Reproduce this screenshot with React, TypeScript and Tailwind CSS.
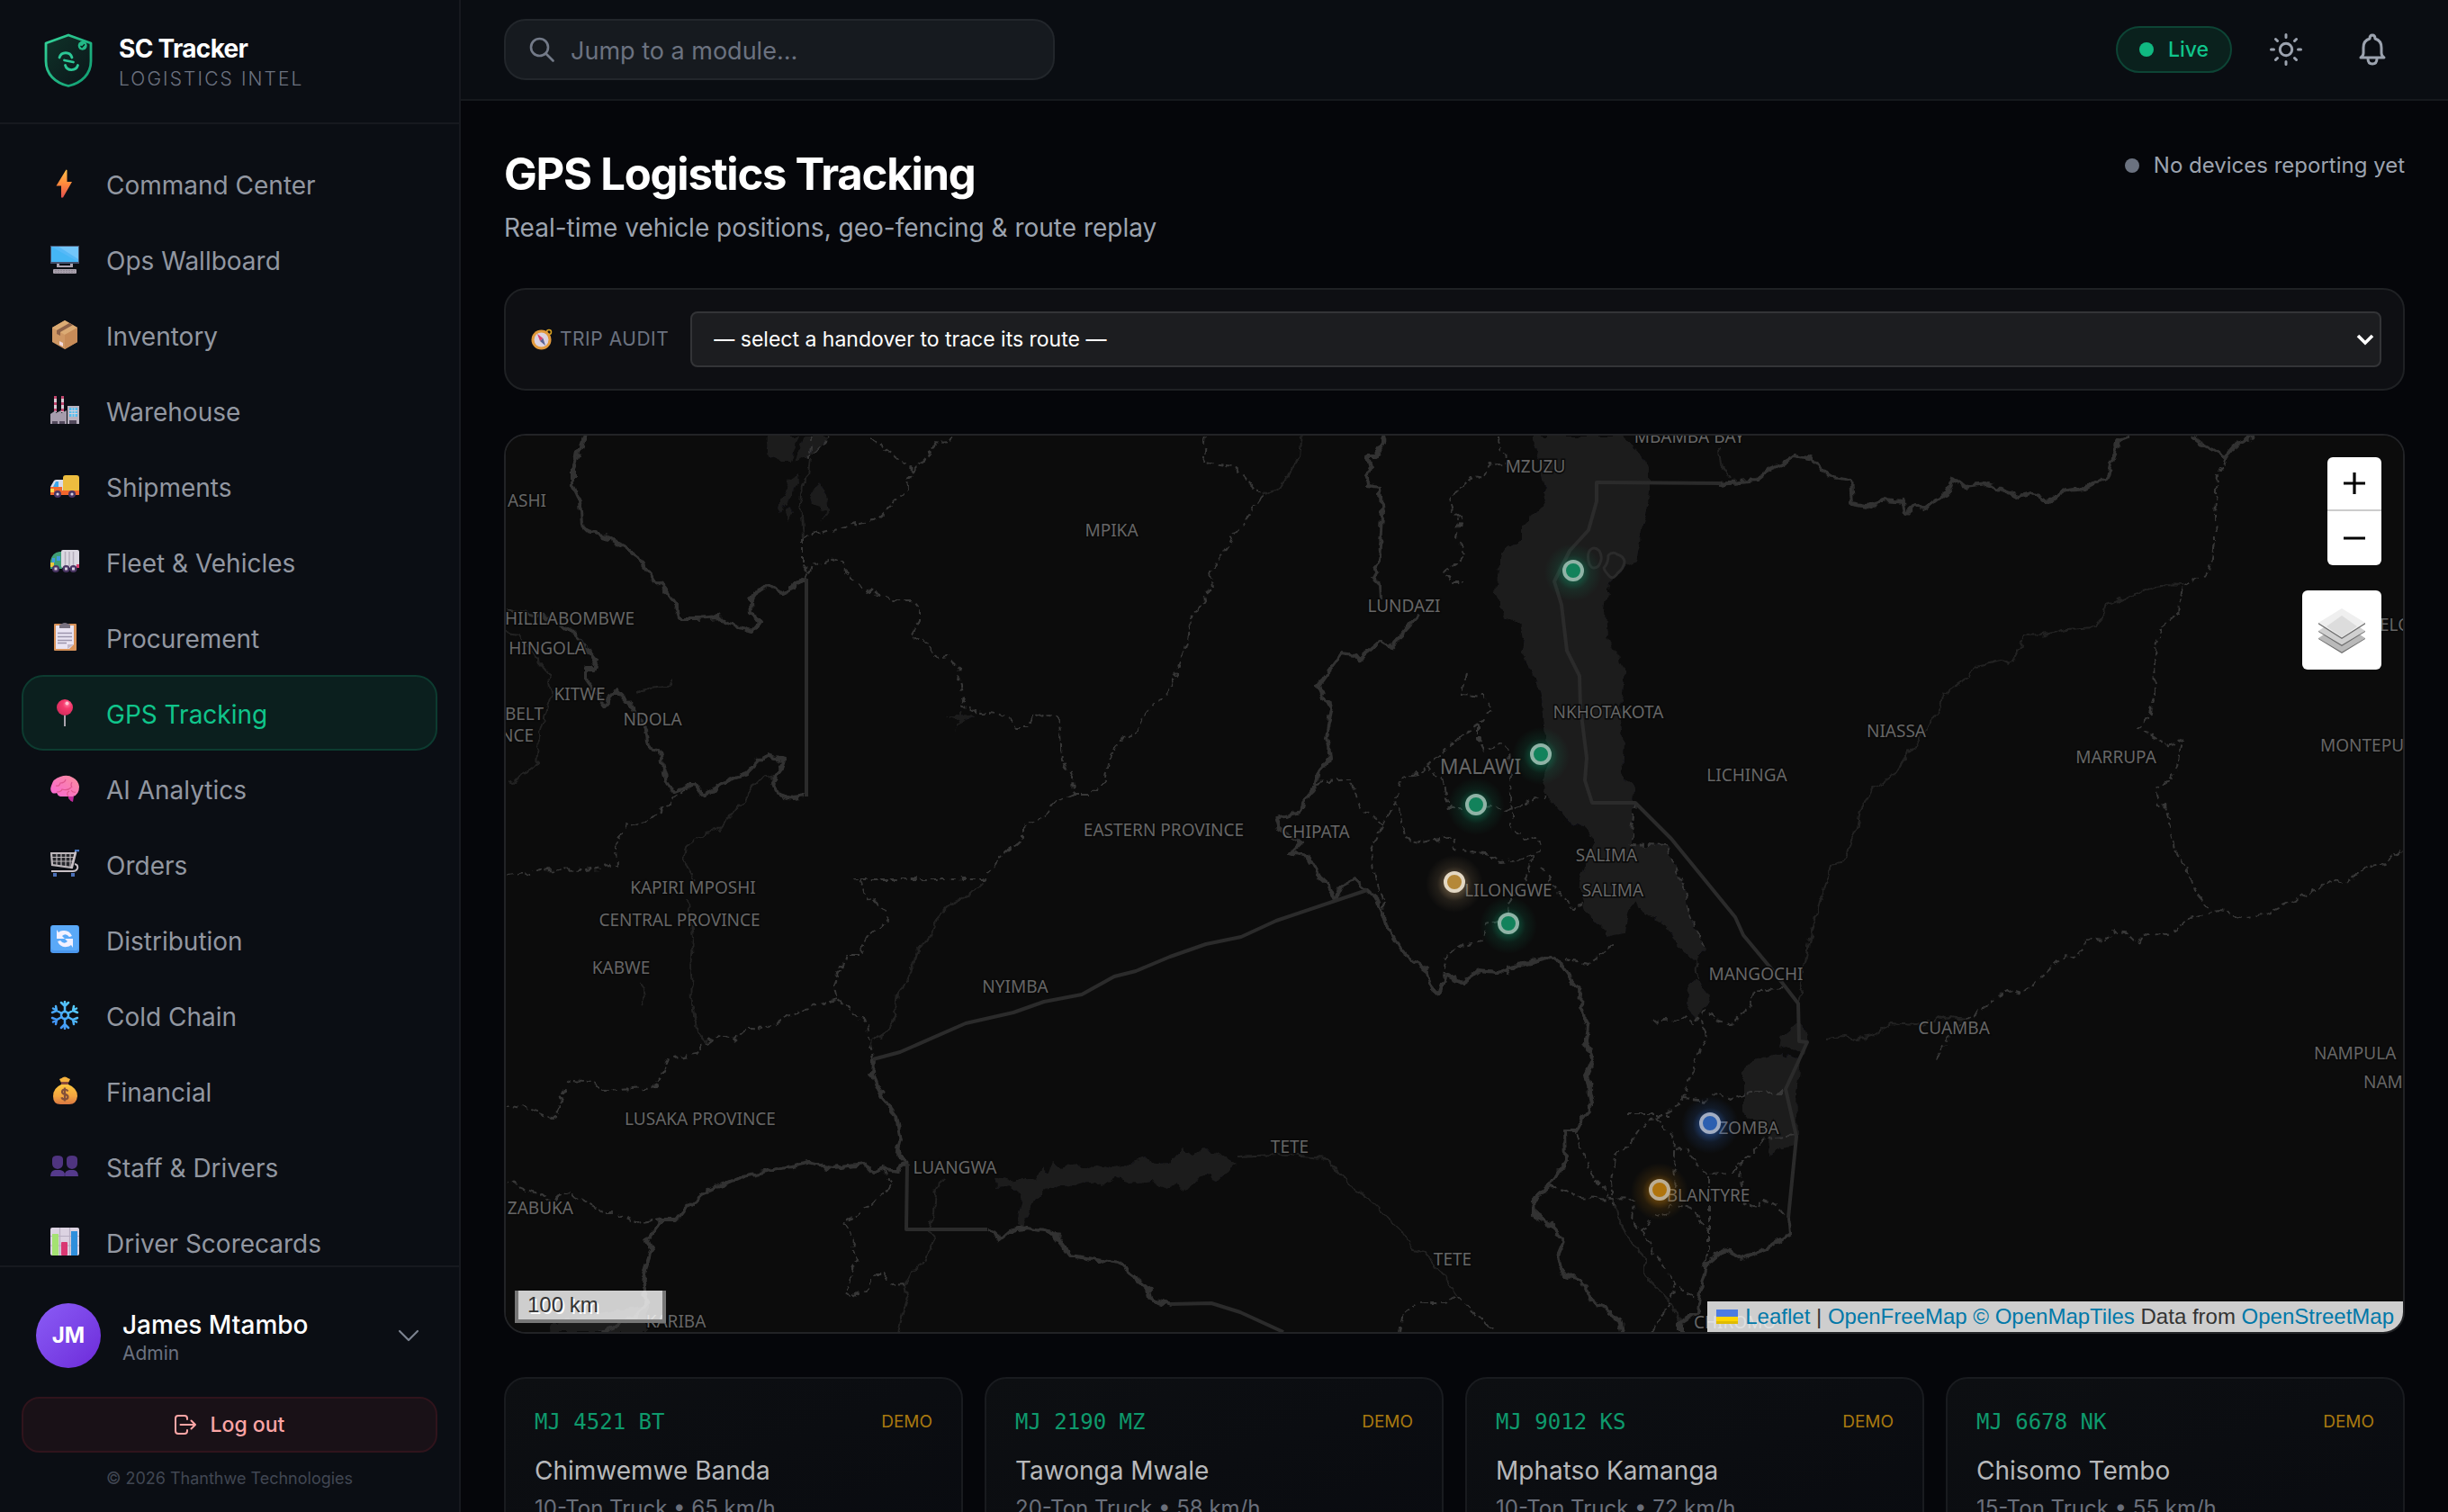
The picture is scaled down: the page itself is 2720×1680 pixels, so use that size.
import type { ReactNode } from "react";

const navItems: { label: string; icon: ReactNode }[] = [
  {
    label: "Command Center",
    icon: (
      <>
        <defs>
          <linearGradient id="bolt" x1="0" y1="0" x2="0" y2="1">
            <stop offset="0" stopColor="#ffc04a" />
            <stop offset="0.5" stopColor="#ff8a3c" />
            <stop offset="1" stopColor="#e2504f" />
          </linearGradient>
        </defs>
        <path d="M17.500 0.500 18.500 1v13h5.500L14 31.500h-2V18.500H6.500z" fill="url(#bolt)" />
      </>
    ),
  },
  {
    label: "Ops Wallboard",
    icon: (
      <>
        <rect x="0" y="1" width="32" height="20" fill="#46526e" />
        <rect x="1" y="2" width="30" height="17" fill="#45b6f5" />
        <path d="M1 2h14l16 12v5z" fill="#56b9f8" />
        <path d="M9 2h22v14z" fill="#73c6fb" />
        <path d="M7 21h3v2h12v-2h3v4H7z" fill="#a9a1ad" />
        <rect x="3" y="27" width="26" height="5" rx="1" fill="#a9a1ad" />
        <path d="M5 28.500h22M5 30.500h22" stroke="#8f8894" strokeDasharray="2 1" strokeWidth="1" />
      </>
    ),
  },
  {
    label: "Inventory",
    icon: (
      <>
        <path d="M16 0 30 8v16L16 32 2 24V8z" fill="#cf9764" />
        <path d="M16 0 30 8 16 16 2 8z" fill="#dcab74" />
        <path d="M16 16 30 8v16L16 32z" fill="#c78b58" />
        <path d="m7 11 14-8 4 2-14 8v4l-4-2z" fill="#8d6148" />
        <path d="m10 23 4 2v4l-4-2z" fill="#f1d9dc" />
      </>
    ),
  },
  {
    label: "Warehouse",
    icon: (
      <>
        <path d="M4 0h3v18H4zM12 0h3v18h-3z" fill="#d9c9d2" />
        <path d="M4 0h3v3H4zM4 7h3v3H4zM4 14h3v3H4zM12 0h3v3h-3zM12 7h3v3h-3zM12 14h3v3h-3z" fill="#c0456d" />
        <rect x="19" y="11" width="13" height="20" fill="#b9b2c0" />
        <path d="M21 13h9v10h-9z" fill="#52bdf0" />
        <path d="M24 13v10M27 13v10M21 16.500h9M21 19.500h9" stroke="#d6d0db" strokeWidth="1" />
        <path d="M0 31V20l6-4v3l6-3v3l6-3v15z" fill="#a69cac" />
        <path d="M2 28h6v3H2zM10 28h6v3h-6zM21 27h8v4h-8z" fill="#52495c" />
      </>
    ),
  },
  {
    label: "Shipments",
    icon: (
      <>
        <rect x="14" y="4" width="18" height="19" rx="3" fill="#edbd3f" />
        <path d="M0 17 4 10q1-1 3-1h7v13H0z" fill="#d9dbe8" />
        <path d="m3 17 3-6h3v6z" fill="#3aa7ec" />
        <path d="M0 17h13v4h19v5H0z" fill="#f2662c" />
        <path d="M0 19h4v4H0z" fill="#ffd34a" />
        <circle cx="8" cy="25" r="4" fill="#4a3564" />
        <circle cx="24" cy="25" r="4" fill="#4a3564" />
        <circle cx="8" cy="25" r="1.600" fill="#d8d0e0" />
        <circle cx="24" cy="25" r="1.600" fill="#d8d0e0" />
      </>
    ),
  },
  {
    label: "Fleet & Vehicles",
    icon: (
      <>
        <path d="M0 22v-7q2-9 10-10h3v19H0z" fill="#3f9f76" />
        <path d="M2 12h3v5H2zM7 10h4v5H7z" fill="#3f9ae0" />
        <path d="M0 17h4v5H0z" fill="#e9c93e" />
        <rect x="12" y="3" width="20" height="20" rx="2" fill="#dcd8e2" />
        <path d="M16.500 5v16M21 5v16M25.500 5v16" stroke="#b5aebd" strokeWidth="1.500" />
        <path d="M29 19h3v4h-3z" fill="#d63b6b" />
        <circle cx="6" cy="24" r="4" fill="#4a3564" />
        <circle cx="17.500" cy="24" r="4" fill="#4a3564" />
        <circle cx="25.500" cy="24" r="4" fill="#4a3564" />
        <path d="M4.500 24h3M16 24h3M24 24h3" stroke="#d8d0e0" strokeWidth="3" />
      </>
    ),
  },
  {
    label: "Procurement",
    icon: (
      <>
        <rect x="4" y="1" width="25" height="30" rx="1" fill="#d9935a" />
        <path d="M6 3h20v21l-5 5H6z" fill="#e9e3f2" />
        <path d="M19 29v-5h7z" fill="#c3b9ca" />
        <path d="M8 11.500h16M8 15.500h16M8 19.500h16M8 22.500h10" stroke="#9d95ad" strokeWidth="1.500" />
        <path d="M10 6V3q0-2 3-2 1-1 3-1t3 1q3 0 3 2v3z" fill="#77707f" />
      </>
    ),
  },
  {
    label: "GPS Tracking",
    icon: (
      <>
        <defs>
          <radialGradient id="pin" cx="0.65" cy="0.3" r="0.8">
            <stop offset="0" stopColor="#ff7ea0" />
            <stop offset="0.35" stopColor="#f5386c" />
            <stop offset="1" stopColor="#cf2c5b" />
          </radialGradient>
        </defs>
        <rect x="15" y="17" width="2" height="14" fill="#a9a3ad" />
        <circle cx="16" cy="10" r="9" fill="url(#pin)" />
        <circle cx="18.500" cy="5.500" r="2" fill="#ffc4d2" />
      </>
    ),
  },
  {
    label: "AI Analytics",
    icon: (
      <>
        <defs>
          <linearGradient id="brain" x1="1" y1="0" x2="0" y2="1">
            <stop offset="0" stopColor="#fb8f9c" />
            <stop offset="1" stopColor="#f765d5" />
          </linearGradient>
        </defs>
        <path d="M20 25h6l-1 6q-3-1-5-4z" fill="#c12a9c" />
        <path d="M2 21Q-1 18 1 13 3 5 11 3q8-3 14 1 6 3 7 10 0 9-7 11H11q-3-1-4-4-3 1-5 0z" fill="url(#brain)" />
        <path d="M6 13q4 1 5-3 5 0 6-4M7 20q5 0 6-3 6 2 10-2M20 25q-3-4 1-6M24 15q-2-3 0-6M28 20q-3 1-5-2" fill="none" stroke="#e0568f" strokeWidth="1.200" />
      </>
    ),
  },
  {
    label: "Orders",
    icon: (
      <>
        <path d="M1 4h27l-4 16-22-3z" fill="#25262b" stroke="#bdb7bb" strokeWidth="2.200" />
        <path d="M7 4v13M12 4v14M17 4v14M22 4v15M2 8.500h24M2 13h23" stroke="#bdb7bb" strokeWidth="1.200" />
        <path d="M28 2l-5 19M27 16q4 1 3 5-1 3-5 3H1" fill="none" stroke="#c9c0c6" strokeWidth="2" />
        <path d="M27 1h5" stroke="#4a78c4" strokeWidth="2.500" />
        <path d="M3 26h4v4H3zM23 26h4v4h-4z" fill="#4a6fb8" />
      </>
    ),
  },
  {
    label: "Distribution",
    icon: (
      <>
        <rect width="32" height="31" y="0" rx="3" fill="#4b97ee" />
        <rect x="1" y="0" width="30" height="28" rx="3" fill="#5aa9f8" />
        <path d="M7 5v10h9l-3-3q4-4 8 1l3-1Q21 5 14 6q-3 0-5 2z" fill="#f3f1ff" />
        <path d="M25 25V15h-9l3 3q-4 4-8-1l-3 1q3 7 10 6 3 0 5-2z" fill="#f3f1ff" />
      </>
    ),
  },
  {
    label: "Cold Chain",
    icon: (
      <>
        <defs>
          <linearGradient id="flake" gradientUnits="userSpaceOnUse" x1="0" y1="32" x2="32" y2="0">
            <stop offset="0" stopColor="#3b82f6" />
            <stop offset="1" stopColor="#5cdcfb" />
          </linearGradient>
        </defs>
        <g fill="none" stroke="url(#flake)" strokeWidth="2.500" strokeLinecap="round">
          <circle cx="16" cy="16" r="4" />
          <path d="M16 12V1M12 2l4 4 4-4M16 20v11M12 30l4-4 4 4" />
          <path d="M12.500 14 3 8.500M2 13l5-2-1-5M19.500 18l9.500 5.500M30 19l-5 2 1 5" />
          <path d="M12.500 18 3 23.500M2 19l5 2-1 5M19.500 14 29 8.500M30 13l-5-2 1-5" />
        </g>
      </>
    ),
  },
  {
    label: "Financial",
    icon: (
      <>
        <defs>
          <linearGradient id="bag" x1="0" y1="0" x2="0" y2="1">
            <stop offset="0" stopColor="#fdc63f" />
            <stop offset="0.6" stopColor="#f3a440" />
            <stop offset="1" stopColor="#d97742" />
          </linearGradient>
        </defs>
        <path d="M10 3q3-1 4-2 2-1 4 0 1 1 4 2l-2 4h-8z" fill="#f6b23e" />
        <path d="M12 9h8q10 4 10 13-1 9-9 9H11q-8 0-8-9 0-9 9-13z" fill="url(#bag)" />
        <rect x="12" y="6" width="8" height="3" fill="#8a4b3a" />
        <path d="M19.500 16.500q-1-2-3.500-2-3 0-3 2.700 0 2 3 2.600 3.500.6 3.500 3 0 2.700-3.500 2.700-3 0-3.500-2.300M16 12.500v15" fill="none" stroke="#83503a" strokeWidth="2.200" />
      </>
    ),
  },
  {
    label: "Staff & Drivers",
    icon: (
      <>
        <path d="M2 8q0-4 6-4t6 4v5q0 5-6 6-6-1-6-6zM18 8q0-4 6-4t6 4v5q0 5-6 6-6-1-6-6z" fill="#4f3480" />
        <path d="M0 27q0-6 5-7h6q5 1 5 5 0-4 5-5h5q5 1 5 7z" fill="#553a8c" />
        <path d="M16 25v2" stroke="#3b2666" strokeWidth="1" />
      </>
    ),
  },
  {
    label: "Driver Scorecards",
    icon: (
      <>
        <rect width="32" height="31" rx="2" fill="#dcd3e2" />
        <path d="M0 9.500h32M0 20h32M10.500 0v31M21.500 0v31" stroke="#b8aec2" strokeWidth="1.200" />
        <rect x="2" y="7" width="7" height="24" fill="#a4e272" />
        <rect x="12" y="16" width="7" height="15" rx="1" fill="#d93873" />
        <rect x="23" y="4" width="7" height="27" fill="#2f8fdc" />
      </>
    ),
  },
];

const vehicles = [
  { plate: "MJ 4521 BT", driver: "Chimwemwe Banda", info: "10-Ton Truck • 65 km/h" },
  { plate: "MJ 2190 MZ", driver: "Tawonga Mwale", info: "20-Ton Truck • 58 km/h" },
  { plate: "MJ 9012 KS", driver: "Mphatso Kamanga", info: "10-Ton Truck • 72 km/h" },
  { plate: "MJ 6678 NK", driver: "Chisomo Tembo", info: "15-Ton Truck • 55 km/h" },
];

// Map geometry, in the coordinate space of the view box below
const lakes = [
  "1703,484 1712,521 1717,553 1712,565 1692,583 1692,600 1670,612 1664,640 1662,660 1673,687 1689,691 1694,711 1691,727 1708,757 1715,786 1718,818 1721,846 1714,865 1719,885 1740,911 1758,917 1772,936 1754,980 1761,1012 1783,1033 1786,1041 1804,1037 1809,1012 1816,1000 1829,1018 1848,1025 1871,1059 1884,1067 1895,1055 1878,1019 1871,988 1852,940 1813,938 1816,877 1802,861 1804,826 1800,794 1806,747 1786,707 1784,680 1788,648 1806,630 1818,624 1824,590 1833,549 1833,525 1825,506 1802,484",
  "1884,1087 1901,1108 1886,1132 1874,1120 1875,1095",
  "1936,1190 1949,1177 1979,1170 2000,1177 1996,1217 1998,1260 1991,1273 1979,1275 1966,1285 1964,1265 1936,1233",
  "1998,1137 2009,1147 2005,1172 1988,1163 1977,1165 1979,1153",
  "1105,1306 1125,1312 1141,1308 1150,1312 1158,1298 1164,1306 1170,1290 1180,1299 1192,1291 1205,1300 1219,1294 1240,1298 1258,1291 1272,1286 1284,1294 1300,1293 1315,1276 1326,1284 1336,1277 1353,1280 1362,1286 1375,1295 1364,1302 1353,1312 1340,1306 1329,1310 1322,1318 1315,1325 1306,1316 1296,1320 1280,1312 1257,1315 1240,1308 1222,1320 1214,1313 1196,1318 1180,1315 1163,1322 1152,1332 1146,1340 1136,1364 1129,1362 1136,1330 1122,1318 1107,1320",
  "852,484 851,502 868,513 878,513 882,498 888,484",
  "894,484 888,500 882,513 894,507 900,508 921,484",
  "887,525 877,533 864,565 867,570 888,537",
  "910,535 900,552 903,563 917,567 912,580 922,567 919,550",
  "877,563 872,568 874,580 882,568",
  "1050,795 1066,795 1068,790 1072,795 1084,796 1072,800 1060,810 1066,799",
  "615,1470 650,1462 719,1450 719,1480 610,1480",
];

const countryBorders = [
  "649,484 637,520 637,540 645,557 647,583 657,593 678,598 701,613 704,613 724,642 737,652 750,670 755,687 774,687 797,685 804,692 835,701 844,690 834,683 833,667 838,660 853,650 868,659 882,653 884,647 896,643",
  "896,885 880,887 864,882 859,868 867,857 871,845 855,839 843,845 829,860 806,868 781,885 772,872 749,880 741,868 731,833 720,830 717,810 698,780 685,767 671,783 650,753 650,743 660,743 663,733 648,715 630,697 609,687 562,678",
  "970,1177 969,1193 979,1217 996,1240 1001,1267 997,1282 1008,1293",
  "1097,1366 1111,1377 1122,1368 1141,1364 1170,1369 1190,1395 1243,1404 1277,1433 1279,1443 1300,1450",
  "1008,1293 996,1301 979,1298 969,1303 961,1294 925,1298 899,1292 853,1301 826,1307 787,1323 761,1343 752,1355 734,1355 719,1377 724,1388 718,1407 714,1425 719,1447 707,1463 667,1480",
  "1539,484 1529,508 1519,508 1523,521 1517,539 1533,541 1536,573 1533,624 1524,640 1534,650 1535,666",
  "1577,683 1563,699 1545,719 1533,713 1510,733 1506,728 1490,726 1478,743 1465,761 1469,776 1481,784 1474,818 1478,842 1465,857 1462,873 1448,891 1446,903 1418,909 1421,921 1446,936 1434,948 1453,952 1467,976 1476,984 1483,999 1490,984 1506,978 1519,989 1531,1000 1540,1027 1562,1062 1586,1080 1591,1098 1599,1105 1606,1083 1624,1092 1644,1078 1673,1081 1676,1075 1727,1062 1744,1087 1757,1102 1756,1118 1764,1140 1762,1157 1771,1178 1763,1193 1769,1227 1758,1243 1751,1257 1739,1257 1740,1290 1722,1317 1705,1333 1706,1350 1722,1360 1738,1378 1730,1397 1738,1417 1758,1423 1768,1445 1782,1453 1799,1467 1802,1480",
  "1912,537 1953,533 1967,521 1980,515 1994,506 2013,510 2032,529 2056,533 2058,559 2079,563 2093,555 2115,557 2117,571 2129,560 2138,566 2164,547 2170,531 2183,541 2207,538 2242,551 2258,548 2276,557 2296,545 2317,543 2343,529 2347,510 2355,488 2365,484",
  "1987,1353 1989,1370 1964,1387 1935,1398 1918,1387 1896,1405 1891,1427 1887,1457 1867,1470 1867,1480",
  "2435,484 2445,492 2473,508 2480,498 2502,484",
];

const straightBorders = [
  "896,643 896,885",
  "970,1177 1000,1169 1073,1137 1126,1125 1160,1113 1202,1105 1238,1085 1262,1079 1300,1063 1340,1049 1379,1041 1418,1023 1519,989",
  "1008,1293 1007,1366 1097,1366",
  "1300,1449 1346,1448 1378,1458 1426,1480",
  "1912,537 1774,536 1774,557 1765,589 1744,612 1727,646 1735,672 1741,723 1755,751 1756,786 1763,842 1761,867 1769,892 1817,892 1857,932 1928,1019 1937,1039 1967,1075 1981,1093 1998,1115 1999,1157 2008,1158 1984,1210 1996,1263 1987,1353",
];

const provinceBorders = [
  "892,597 939,585 975,577 1009,542 1008,533 1015,523 965,484",
  "1015,523 1031,505 1040,492 1054,491 1059,484",
  "903,484 899,508 921,484",
  "892,597 892,627 899,637 896,643 903,628 923,621 939,627 940,637 956,652 981,662 992,667 1013,667 1022,678 1022,690 1013,705 1031,715 1041,732 1054,730 1067,742 1065,757 1070,772 1068,782 1082,790 1109,793 1123,798 1130,808 1142,808 1148,797 1160,792 1177,800 1180,845 1191,862 1192,882",
  "1192,882 1210,882 1227,870 1231,847 1247,820 1260,816 1278,786 1294,774 1308,747 1320,707 1322,691 1347,652 1345,636 1370,597 1402,553 1382,529 1370,519 1336,515 1340,484",
  "1192,882 1171,892 1160,907 1137,918 1137,933 1109,953 1102,968 1092,977 948,977 957,980 962,998 976,1003 987,1023 966,1040 954,1060 942,1060 935,1073 927,1097 930,1110 952,1127 964,1140 967,1160 970,1177",
  "930,1110 913,1115 879,1127 850,1143 831,1142 816,1155 797,1149 785,1158 773,1172 743,1177 729,1208 671,1212 659,1203 639,1200 630,1203 618,1237 613,1242 588,1232 563,1227",
  "770,870 737,898 717,913 696,918 684,940 685,962 650,967 600,966 588,971 562,973",
  "734,1355 707,1359 685,1348 671,1348 644,1332 632,1325 608,1335 598,1327 563,1312",
  "983,1299 991,1318 962,1342 938,1359 950,1378 946,1387 953,1400 947,1413 940,1438 946,1442 967,1430 970,1417 982,1417 993,1429 1005,1428",
  "1665,484 1666,500 1673,504 1675,517 1655,515 1650,531 1637,529 1611,553 1614,567 1623,577 1618,597 1630,618 1604,636 1614,647 1627,647",
  "1629,749 1625,772 1648,774 1658,788 1643,806 1643,820 1650,834 1669,824 1676,834 1680,901 1680,919 1694,933 1708,929 1712,946 1687,956 1666,958 1650,948 1616,944 1614,929 1581,936 1561,931 1558,905 1550,893",
  "1643,806 1616,824 1584,851 1577,859 1559,863 1550,893 1536,917 1524,944 1526,972 1538,1004 1540,1027",
  "1584,851 1602,865 1611,899 1660,895 1673,901 1717,883",
  "1703,950 1694,980 1676,1004 1674,1022 1650,1027 1648,1045 1627,1049 1604,1063 1602,1090",
  "1712,964 1747,1010 1758,1004",
  "1463,869 1502,866 1510,897 1536,917",
  "1816,893 1812,938 1852,940 1871,988 1878,1019 1895,1055",
  "1738,1066 1765,1071 1795,1047",
  "1981,1098 1949,1102 1942,1123 1923,1138 1906,1133 1895,1122 1882,1138 1874,1130 1870,1133 1833,1135",
  "1891,1133 1894,1153 1882,1183 1870,1220 1857,1233 1840,1243 1828,1245 1814,1267 1794,1287 1791,1310 1793,1340",
  "1807,1239 1853,1239",
  "1870,1220 1896,1223 1908,1214 1923,1222 1945,1214 1984,1214",
  "1840,1243 1862,1267 1860,1297 1862,1320",
  "1862,1277 1874,1275 1886,1297 1901,1305 1923,1303 1940,1287 1962,1265 1996,1262",
  "1935,1290 1933,1310 1937,1337 1954,1343 1957,1333 1974,1340 1983,1353",
  "1899,1307 1899,1387 1894,1407",
  "1751,1260 1768,1303 1787,1330",
  "1724,1318 1753,1330 1816,1333 1814,1357 1823,1368 1838,1352 1853,1347 1857,1338 1877,1340 1899,1368",
  "1823,1368 1862,1427 1889,1445",
  "1862,1425 1850,1457 1836,1480",
  "1555,1480 1559,1460 1576,1447 1605,1447 1619,1439 1659,1478",
  "2473,508 2464,529 2461,573 2462,600 2455,634 2426,651 2421,680 2401,697 2393,731 2394,772 2385,800 2376,809 2407,828 2424,822 2419,853 2412,867 2394,877 2398,896 2407,895 2417,944 2433,972 2440,992 2457,1012",
  "2150,1177 2164,1155 2184,1133 2208,1115 2236,1100 2247,1103 2263,1090 2294,1062 2306,1065 2315,1055 2316,1043 2339,1045 2348,1035 2361,1036 2373,1048 2388,1037 2410,1038 2433,1020 2466,1012 2494,1019 2516,1017 2565,993 2594,978 2603,982 2634,962 2650,959 2669,943",
];

const rivers = [
  "900,510 898,527 891,540 889,560 892,597",
  "1402,551 1425,541 1444,506 1447,484",
  "1091,980 1078,993 1056,1005 1042,1020 1034,1040 1017,1060 1008,1090 998,1103 996,1127 986,1147 967,1160",
  "763,1000 770,1040 768,1080 769,1117 775,1147 785,1158",
  "772,977 760,957 763,940 783,925 797,923 815,903 834,877 843,867 866,862",
  "562,703 577,705 595,730 609,747 613,770 600,810 596,850 581,860 570,870 563,868",
  "1049,1308 1039,1323 1037,1347 1031,1367 1039,1378 1027,1402 1013,1413 1005,1428 1009,1442 1003,1460 998,1480",
  "1793,1340 1807,1373 1828,1397 1828,1418 1853,1443 1870,1473",
  "1375,1285 1416,1283 1474,1287 1499,1317 1518,1330 1557,1367 1571,1390 1584,1392 1619,1439",
  "1998,1115 2004,1079 2011,1043 2018,1015 2034,962 2046,960 2063,921 2067,901 2080,877 2105,861 2122,834 2140,810 2157,786 2159,772 2188,751 2195,740 2223,734 2233,739 2243,723 2249,707 2268,706 2296,699 2329,697 2343,672 2376,658 2402,650 2426,651",
  "2029,1153 2049,1151 2063,1155 2079,1151 2101,1137 2129,1139 2159,1130 2184,1133",
  "1910,498 1912,517 1921,531",
  "710,1092 719,1104 714,1118",
  "708,770 720,764 740,762 748,755",
  "1884,1067 1888,1087",
];

type Anchor = "start" | "middle" | "end";

const places: { name: string; x: number; y: number; anchor?: Anchor }[] = [
  { name: "ASHI", x: 607, y: 556, anchor: "end" },
  { name: "HILILABOMBWE", x: 705, y: 687, anchor: "end" },
  { name: "HINGOLA", x: 651, y: 720, anchor: "end" },
  { name: "BELT", x: 604, y: 793, anchor: "end" },
  { name: "NCE", x: 593, y: 817, anchor: "end" },
  { name: "ZABUKA", x: 637, y: 1342, anchor: "end" },
  { name: "MPIKA", x: 1235, y: 589 },
  { name: "MZUZU", x: 1706, y: 518 },
  { name: "MBAMBA BAY", x: 1877, y: 485 },
  { name: "LUNDAZI", x: 1560, y: 673 },
  { name: "KITWE", x: 644, y: 771 },
  { name: "NDOLA", x: 725, y: 799 },
  { name: "NKHOTAKOTA", x: 1787, y: 791 },
  { name: "NIASSA", x: 2107, y: 812 },
  { name: "MARRUPA", x: 2351, y: 841 },
  { name: "LICHINGA", x: 1941, y: 861 },
  { name: "EASTERN PROVINCE", x: 1293, y: 922 },
  { name: "CHIPATA", x: 1462, y: 924 },
  { name: "SALIMA", x: 1785, y: 950 },
  { name: "SALIMA", x: 1792, y: 989 },
  { name: "LILONGWE", x: 1676, y: 989 },
  { name: "KAPIRI MPOSHI", x: 770, y: 986 },
  { name: "CENTRAL PROVINCE", x: 755, y: 1022 },
  { name: "KABWE", x: 690, y: 1075 },
  { name: "NYIMBA", x: 1128, y: 1096 },
  { name: "MANGOCHI", x: 1951, y: 1082 },
  { name: "CUAMBA", x: 2171, y: 1142 },
  { name: "LUSAKA PROVINCE", x: 778, y: 1243 },
  { name: "ZOMBA", x: 1943, y: 1253 },
  { name: "BLANTYRE", x: 1898, y: 1328 },
  { name: "TETE", x: 1433, y: 1274 },
  { name: "TETE", x: 1614, y: 1399 },
  { name: "LUANGWA", x: 1061, y: 1297 },
  { name: "KARIBA", x: 751, y: 1468 },
  { name: "ELO", x: 2644, y: 694, anchor: "start" },
  { name: "MONTEPU", x: 2578, y: 828, anchor: "start" },
  { name: "NAMPULA", x: 2571, y: 1170, anchor: "start" },
  { name: "NAM", x: 2626, y: 1202, anchor: "start" },
  { name: "CHIROMO", x: 1882, y: 1469, anchor: "start" },
];

const markers = [
  { x: 1748, y: 634, fill: "#12825b", ring: "#8fb3a6", glow: "glow-green" },
  { x: 1712, y: 838, fill: "#12825b", ring: "#8fb3a6", glow: "glow-green" },
  { x: 1640, y: 894, fill: "#12825b", ring: "#8fb3a6", glow: "glow-green" },
  { x: 1676, y: 1026, fill: "#12825b", ring: "#8fb3a6", glow: "glow-green" },
  { x: 1616, y: 980, fill: "#b58838", ring: "#e3d8c4", glow: "glow-sand" },
  { x: 1900, y: 1248, fill: "#2c5fb0", ring: "#a2adc2", glow: "glow-blue" },
  { x: 1844, y: 1322, fill: "#b0740b", ring: "#bbad92", glow: "glow-amber" },
];

const glows = [
  { id: "glow-green", color: "#0fa472" },
  { id: "glow-sand", color: "#c9a878" },
  { id: "glow-blue", color: "#3b82f6" },
  { id: "glow-amber", color: "#e08e0b" },
];

function Logo() {
  return (
    <svg viewBox="0 0 64 64" className="size-16 shrink-0" fill="none" aria-hidden="true">
      <defs>
        <linearGradient id="shield" x1="0" y1="0" x2="1" y2="1">
          <stop offset="0" stopColor="#34d399" />
          <stop offset="1" stopColor="#0f9b70" />
        </linearGradient>
        <linearGradient id="shield-fill" x1="0" y1="0" x2="1" y2="1">
          <stop offset="0" stopColor="#0f3329" />
          <stop offset="1" stopColor="#0b1519" />
        </linearGradient>
      </defs>
      <path d="M32 3 57 12v20c0 14-10 24-25 27.500C17 56 7 46 7 32V12z" fill="url(#shield-fill)" stroke="url(#shield)" strokeWidth="2.800" strokeLinejoin="round" />
      <g stroke="#2cc896" strokeWidth="2.800" strokeLinecap="round">
        <path d="M22 28c2-7 12-7 14 0" />
        <path d="M27.500 31l10 2" />
        <path d="M28.500 36.500c2 7 12 6.500 14 0" />
      </g>
      <circle cx="47.700" cy="14.700" r="5" fill="#23b886" />
      <path d="m45.500 15 1.500 1.500 3-3.200" stroke="#0b1a18" strokeWidth="1.400" />
    </svg>
  );
}

function Sidebar() {
  return (
    <aside className="flex w-[512px] shrink-0 flex-col border-r-2 border-[#17191f] bg-[#0b0e14]">
      <div className="flex h-[138px] shrink-0 items-center gap-6 border-b-2 border-[#17191f] px-11">
        <Logo />
        <div className="pt-1">
          <div className="text-[28px] leading-9 font-bold tracking-tight text-white">SC Tracker</div>
          <div className="text-[21px] leading-8 font-light tracking-widest text-[#6b7280]">LOGISTICS INTEL</div>
        </div>
      </div>

      <nav className="min-h-0 flex-1 overflow-y-auto px-6 pt-6 [scrollbar-width:none]">
        {navItems.map((item) => {
          const active = item.label === "GPS Tracking";
          return (
            <a
              key={item.label}
              href="#"
              className={`flex h-[84px] items-center gap-7 rounded-3xl border-2 px-7 text-[28px] ${
                active ? "border-[#0d3b30] bg-[#0b1f1e] text-[#10c58b]" : "border-transparent text-[#9297a1]"
              }`}
            >
              <span className="flex w-9 justify-center">
                <svg viewBox="0 0 32 32" className="size-8" aria-hidden="true">
                  {item.icon}
                </svg>
              </span>
              <span className="pt-1">{item.label}</span>
            </a>
          );
        })}
      </nav>

      <div className="flex shrink-0 flex-col border-t-2 border-[#17191f] p-6">
        <button className="flex items-center gap-6 p-4 text-left">
          <span className="flex size-[72px] items-center justify-center rounded-full bg-linear-to-br from-[#8b5cf6] to-[#6d28d9] text-[24px] font-bold text-white">
            JM
          </span>
          <span className="flex-1 pt-1">
            <span className="block text-[28px] leading-9 font-medium text-white">James Mtambo</span>
            <span className="block text-[21px] leading-7 text-[#6b7280]">Admin</span>
          </span>
          <svg viewBox="0 0 24 24" className="mr-1 size-6" fill="none" stroke="#7b828f" strokeWidth="2.200" strokeLinecap="round" strokeLinejoin="round" aria-hidden="true">
            <path d="m2 7 10 10L22 7" />
          </svg>
        </button>
        <button className="mt-4 flex h-[62px] items-center justify-center gap-4 rounded-[20px] border-2 border-[#30141c] bg-[#191117] text-[23px] font-medium text-[#fca5a5]">
          <svg viewBox="0 0 24 24" className="size-6" fill="none" stroke="currentColor" strokeWidth="2" strokeLinecap="round" strokeLinejoin="round" aria-hidden="true">
            <path d="M14 6V5q0-3-3-3H4Q1 2 1 5v14q0 3 3 3h7q3 0 3-3v-1M6.500 12H23M18.500 7.500 23 12l-4.500 4.500" />
          </svg>
          Log out
        </button>
        <p className="mt-4 text-center text-[18px] leading-[26px] text-[#414753]">© 2026 Thanthwe Technologies</p>
      </div>
    </aside>
  );
}

function Topbar() {
  return (
    <header className="flex h-28 shrink-0 items-center justify-between border-b-2 border-[#16191d] bg-[#0a0d12] px-12">
      <label className="flex h-[68px] w-[612px] items-center gap-[18px] rounded-3xl border-2 border-[#22262b] bg-[#161a1f] px-[26px]">
        <svg viewBox="0 0 28 28" className="size-7 shrink-0" fill="none" stroke="#737a88" strokeWidth="2.600" strokeLinecap="round" aria-hidden="true">
          <circle cx="11.500" cy="11.500" r="9.500" />
          <path d="m18.500 18.500 8 8" />
        </svg>
        <input
          type="text"
          aria-label="Jump to a module"
          placeholder="Jump to a module…"
          className="min-w-0 flex-1 bg-transparent pt-1 text-[27px] text-white outline-none placeholder:text-[#6b7280]"
        />
      </label>

      <div className="flex items-center gap-6">
        <span className="flex h-[52px] items-center gap-4 rounded-full border-2 border-[#0d4435] bg-[#0a211d] px-6 text-[23px] font-medium text-[#10c58b]">
          <span className="size-4 rounded-full bg-[#10b981]" />
          Live
        </span>
        <button aria-label="Toggle theme" className="flex size-[72px] items-center justify-center">
          <svg viewBox="0 0 40 40" className="size-10" fill="none" stroke="#9ca3af" strokeWidth="3" strokeLinecap="round" aria-hidden="true">
            <circle cx="20" cy="20" r="6.700" />
            <path d="M20 3.500v3M20 33.500v3M3.500 20h3M33.500 20h3M8.500 8.500l2 2M29.500 29.500l2 2M8.500 31.500l2-2M29.500 10.500l2-2" />
          </svg>
        </button>
        <button aria-label="Notifications" className="flex size-[72px] items-center justify-center">
          <svg viewBox="0 0 40 40" className="size-10" fill="none" stroke="#9ca3af" strokeWidth="3" strokeLinecap="round" strokeLinejoin="round" aria-hidden="true">
            <path d="M17 8q0-4 3-4t3 4q7 2 7 10v6q0 3 3 5H7q3-2 3-5v-6q0-8 7-10z" />
            <path d="M15 30q0 6 5 6t5-6" />
          </svg>
        </button>
      </div>
    </header>
  );
}

function MapCanvas() {
  return (
    <svg viewBox="562 484 2108 996" preserveAspectRatio="xMidYMid slice" className="block size-full bg-[#0c0c0c]" fill="none" role="img" aria-label="Map of Malawi">
      <defs>
        {/* breaks the plotted segments up into a natural coast and river line */}
        <filter id="rough" filterUnits="userSpaceOnUse" x="540" y="460" width="2150" height="1040">
          <feTurbulence type="fractalNoise" baseFrequency="0.09" numOctaves="2" seed="4" />
          <feDisplacementMap in="SourceGraphic" scale="10" xChannelSelector="R" yChannelSelector="G" />
        </filter>
        {glows.map((g) => (
          <radialGradient key={g.id} id={g.id}>
            <stop offset="0.3" stopColor={g.color} stopOpacity="0.4" />
            <stop offset="0.6" stopColor={g.color} stopOpacity="0.12" />
            <stop offset="1" stopColor={g.color} stopOpacity="0" />
          </radialGradient>
        ))}
      </defs>
      <g filter="url(#rough)" strokeLinejoin="round">
        {lakes.map((points) => (
          <polygon key={points} points={points} fill="#1c1c1e" />
        ))}
        {rivers.map((points) => (
          <polyline key={points} points={points} stroke="#222222" strokeWidth="2" />
        ))}
        {provinceBorders.map((points) => (
          <polyline key={points} points={points} stroke="#383838" strokeWidth="2" strokeDasharray="7 4" />
        ))}
        {countryBorders.map((points) => (
          <polyline key={points} points={points} stroke="#323232" strokeWidth="4" />
        ))}
      </g>
      <g stroke="#2b2b2b" strokeWidth="4" strokeLinejoin="round">
        {straightBorders.map((points) => (
          <polyline key={points} points={points} />
        ))}
        <path d="M1766 612q5-6 11 0 5 9-1 17-6 5-10-2-3-9 0-15zM1787 617q5-5 10-1 7 2 8 8-1 8-7 12-5 8-9 5-6-6-7-10 5-5 5-14z" strokeWidth="3" />
      </g>
      <g fontFamily="'Noto Sans', sans-serif" fontSize="19" fill="#666666" stroke="#090909" strokeWidth="3" paintOrder="stroke">
        {places.map((p) => (
          <text key={`${p.name}-${p.y}`} x={p.x} y={p.y} textAnchor={p.anchor ?? "middle"} dominantBaseline="central">
            {p.name}
          </text>
        ))}
        <text x="1645" y="851" fontSize="23" textAnchor="middle" dominantBaseline="central">
          MALAWI
        </text>
      </g>
      {markers.map((m) => (
        <g key={`${m.x}-${m.y}`}>
          <circle cx={m.x} cy={m.y + 2} r="32" fill={`url(#${m.glow})`} />
          <circle cx={m.x} cy={m.y} r="10" fill={m.fill} stroke={m.ring} strokeWidth="4" />
        </g>
      ))}
    </svg>
  );
}

function TrackingMap() {
  return (
    <section className="relative h-[1000px] overflow-hidden rounded-3xl border-2 border-[#222326]">
      <MapCanvas />

      <div className="absolute top-6 right-6 flex flex-col items-end gap-7">
        <div className="flex flex-col overflow-hidden rounded-md bg-white">
          <button aria-label="Zoom in" className="flex size-[60px] items-center justify-center border-b-2 border-[#cccccc]">
            <svg viewBox="0 0 24 24" className="size-6" stroke="#000" strokeWidth="3.200" aria-hidden="true">
              <path d="M0 12h24M12 0v24" />
            </svg>
          </button>
          <button aria-label="Zoom out" className="flex size-[60px] items-center justify-center">
            <svg viewBox="0 0 24 24" className="size-6" stroke="#000" strokeWidth="3.200" aria-hidden="true">
              <path d="M0 12h24" />
            </svg>
          </button>
        </div>
        <button aria-label="Layers" className="flex size-[88px] items-center justify-center rounded-md bg-white">
          <svg viewBox="0 0 52 52" className="size-[52px]" aria-hidden="true">
            <path d="M0 35 26 18l26 17-26 16z" fill="#b9b9b9" />
            <path d="M0 35v1l26 16 26-16v-1L26 50.500z" fill="#6f6f6f" />
            <path d="M0 27 26 10l26 17-26 16z" fill="#d0d0d0" />
            <path d="M0 27v1l26 16 26-16v-1L26 42.500z" fill="#6f6f6f" />
            <path d="M0 18 26 2l26 16-26 17z" fill="#efefef" />
            <path d="m9 22 17-12 17 12-17 12z" fill="#dcdcdc" />
            <path d="M0 18v1.500L26 36l26-16.500V18L26 34.500z" fill="#6f6f6f" />
          </svg>
        </button>
      </div>

      <div className="absolute bottom-[10px] left-[10px] h-9 w-[168px] border-4 border-t-0 border-[#777777] bg-white/80 px-[10px] font-['Liberation_Sans',sans-serif] text-[24px] leading-8 text-[#333333] [text-shadow:2px_2px_#ffffff]">
        100 km
      </div>

      <div className="absolute right-0 bottom-0 flex h-[34px] items-center bg-white/80 px-[10px] font-['Liberation_Sans',sans-serif] text-[24px] text-[#333333]">
        <svg viewBox="0 0 24 16" className="mr-2 h-4 w-6" aria-hidden="true">
          <path d="M0 0h24v8H0z" fill="#4c7be1" />
          <path d="M0 8h24v5H0z" fill="#ffd500" />
          <path d="M0 13h24v3H0z" fill="#e0bc00" />
        </svg>
        <p className="whitespace-nowrap">
          <a href="#" className="text-[#0078a8]">Leaflet</a> |{" "}
          <a href="#" className="text-[#0078a8]">OpenFreeMap</a>{" "}
          <a href="#" className="text-[#0078a8]">© OpenMapTiles</a> Data from{" "}
          <a href="#" className="text-[#0078a8]">OpenStreetMap</a>
        </p>
      </div>
    </section>
  );
}

function TripAudit() {
  return (
    <section className="flex items-center gap-6 rounded-3xl border-2 border-[#1f2124] bg-[#0e0f13] p-6">
      <label htmlFor="trip" className="flex items-center gap-2 pl-1 text-[21px] tracking-wide text-[#6b7280]">
        <svg viewBox="0 0 24 24" className="size-6" aria-hidden="true">
          <circle cx="20" cy="4" r="2.500" fill="none" stroke="#d5a021" strokeWidth="1.500" />
          <circle cx="11.500" cy="12.500" r="11" fill="#e29a3c" />
          <circle cx="11.500" cy="12.500" r="8" fill="#dcd3e0" />
          <path d="m7 6 6.500 5-3.500 3z" fill="#d8416c" />
          <path d="m16 19-6-5 3.500-3z" fill="#5b6290" />
        </svg>
        TRIP AUDIT
      </label>
      <div className="relative flex-1">
        <select id="trip" className="h-[62px] w-full appearance-none rounded-lg border-2 border-[#333437] bg-[#1c1d20] px-6 text-[23px] text-white">
          <option>— select a handover to trace its route —</option>
        </select>
        <svg viewBox="0 0 20 20" className="pointer-events-none absolute top-[21px] right-2 size-5" fill="none" stroke="#fff" strokeWidth="3.600" aria-hidden="true">
          <path d="m2 6 8 8 8-8" />
        </svg>
      </div>
    </section>
  );
}

export default function App() {
  return (
    <div className="flex h-screen overflow-hidden bg-[#05060a] font-['Inter',sans-serif]">
      <Sidebar />
      <div className="flex min-w-0 flex-1 flex-col">
        <Topbar />
        <main className="flex min-h-0 flex-1 flex-col gap-12 overflow-y-auto px-12 pt-12 [scrollbar-width:none]">
          <div className="flex items-start justify-between">
            <div>
              <h1 className="text-[49px] leading-[68px] font-bold tracking-tight text-white">GPS Logistics Tracking</h1>
              <p className="pt-1.5 text-[28px] leading-[38px] text-[#9ca3af]">Real-time vehicle positions, geo-fencing &amp; route replay</p>
            </div>
            <p className="mt-1 flex items-center gap-4 text-[24px] leading-10 text-[#9ca3af]">
              <span className="size-4 rounded-full bg-[#6b7280]" />
              No devices reporting yet
            </p>
          </div>

          <TripAudit />
          <div className="shrink-0">
            <TrackingMap />
          </div>

          <div className="grid shrink-0 grid-cols-4 gap-6">
            {vehicles.map((v) => (
              <article key={v.plate} className="rounded-3xl border-2 border-[#191b1f] bg-linear-to-br from-[#0d0f12] to-[#090b10] p-8">
                <div className="flex h-8 items-center justify-between">
                  <span className="font-['DejaVu_Sans_Mono',monospace] text-[24px] text-[#0e9a6c]">{v.plate}</span>
                  <span className="text-[19px] text-[#a8790f]">DEMO</span>
                </div>
                <h2 className="mt-4 text-[28px] leading-11 text-[#b7b8ba]">{v.driver}</h2>
                <p className="mt-1 text-[24px] leading-8 text-[#6a6f7a]">{v.info}</p>
              </article>
            ))}
          </div>
        </main>
      </div>
    </div>
  );
}
